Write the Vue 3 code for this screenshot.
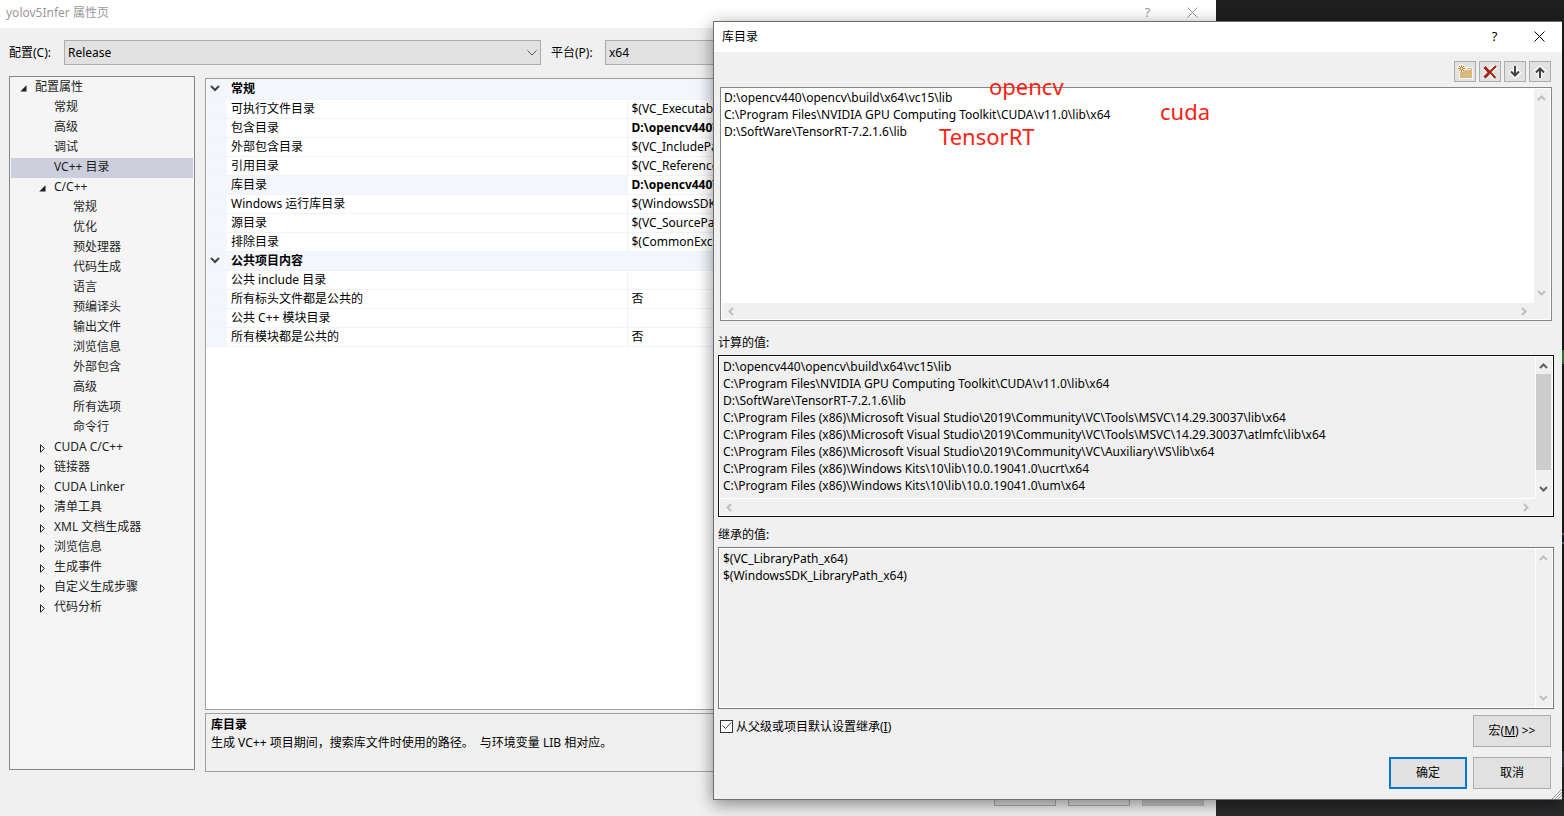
<script setup>
import { ref } from 'vue'

const tree = [
  { text: '配置属性', level: 0, state: 'open' },
  { text: '常规', level: 1 },
  { text: '高级', level: 1 },
  { text: '调试', level: 1 },
  { text: 'VC++ 目录', level: 1, selected: true },
  { text: 'C/C++', level: 1, state: 'open' },
  { text: '常规', level: 2 },
  { text: '优化', level: 2 },
  { text: '预处理器', level: 2 },
  { text: '代码生成', level: 2 },
  { text: '语言', level: 2 },
  { text: '预编译头', level: 2 },
  { text: '输出文件', level: 2 },
  { text: '浏览信息', level: 2 },
  { text: '外部包含', level: 2 },
  { text: '高级', level: 2 },
  { text: '所有选项', level: 2 },
  { text: '命令行', level: 2 },
  { text: 'CUDA C/C++', level: 1, state: 'closed' },
  { text: '链接器', level: 1, state: 'closed' },
  { text: 'CUDA Linker', level: 1, state: 'closed' },
  { text: '清单工具', level: 1, state: 'closed' },
  { text: 'XML 文档生成器', level: 1, state: 'closed' },
  { text: '浏览信息', level: 1, state: 'closed' },
  { text: '生成事件', level: 1, state: 'closed' },
  { text: '自定义生成步骤', level: 1, state: 'closed' },
  { text: '代码分析', level: 1, state: 'closed' },
]

const props = [
  { group: true, name: '常规' },
  { name: '可执行文件目录', value: '$(VC_ExecutablePath_x64)' },
  { name: '包含目录', value: 'D:\\opencv440\\opencv\\build', bold: true },
  { name: '外部包含目录', value: '$(VC_IncludePath)' },
  { name: '引用目录', value: '$(VC_ReferencesPath_x64)' },
  { name: '库目录', value: 'D:\\opencv440\\opencv\\build', bold: true, selected: true },
  { name: 'Windows 运行库目录', value: '$(WindowsSDK_MetadataPath)' },
  { name: '源目录', value: '$(VC_SourcePath)' },
  { name: '排除目录', value: '$(CommonExcludePath)' },
  { group: true, name: '公共项目内容' },
  { name: '公共 include 目录', value: '' },
  { name: '所有标头文件都是公共的', value: '否' },
  { name: '公共 C++ 模块目录', value: '' },
  { name: '所有模块都是公共的', value: '否' },
]

const own = [
  'D:\\opencv440\\opencv\\build\\x64\\vc15\\lib',
  'C:\\Program Files\\NVIDIA GPU Computing Toolkit\\CUDA\\v11.0\\lib\\x64',
  'D:\\SoftWare\\TensorRT-7.2.1.6\\lib',
]
const vs = 'C:\\Program Files (x86)\\Microsoft Visual Studio\\2019\\Community\\VC\\'
const kits = 'C:\\Program Files (x86)\\Windows Kits\\10\\lib\\10.0.19041.0\\'

const boxes = [
  { id: 'own', lines: own, hbar: true },
  {
    id: 'computed',
    label: '计算的值:',
    lines: [
      ...own,
      vs + 'Tools\\MSVC\\14.29.30037\\lib\\x64',
      vs + 'Tools\\MSVC\\14.29.30037\\atlmfc\\lib\\x64',
      vs + 'Auxiliary\\VS\\lib\\x64',
      kits + 'ucrt\\x64',
      kits + 'um\\x64',
    ],
    hbar: true,
    thumb: true,
  },
  { id: 'inherited', label: '继承的值:', lines: ['$(VC_LibraryPath_x64)', '$(WindowsSDK_LibraryPath_x64)'] },
]
const inherit = ref(true)
</script>

<template>
  <div class="desktop">
    <i class="mark green"></i>
    <i class="mark blue"></i>

    <main class="window pages">
      <header class="title">
        <h1>yolov5Infer 属性页</h1>
        <button class="cap" type="button" aria-label="帮助">?</button>
        <button class="cap" type="button" aria-label="关闭">
          <svg width="11" height="11" viewBox="0 0 11 11"><path d="M.5 .5l10 10M10.5 .5l-10 10" /></svg>
        </button>
      </header>

      <div class="config">
        <label for="cfg">配置(C):</label>
        <span class="combo first">
          <select id="cfg"><option>Release</option></select>
          <svg width="10" height="6" viewBox="0 0 10 6"><path d="M.5 .5L5 5L9.5 .5" /></svg>
        </span>
        <label for="plat" class="second-label">平台(P):</label>
        <span class="combo second">
          <select id="plat"><option>x64</option></select>
          <svg width="10" height="6" viewBox="0 0 10 6"><path d="M.5 .5L5 5L9.5 .5" /></svg>
        </span>
      </div>

      <div class="body">
        <ul class="tree">
          <li v-for="(n, i) in tree" :key="i" :class="['lv' + n.level, { sel: n.selected }]">
            <span class="twist">
              <svg v-if="n.state === 'open'" width="7" height="7" viewBox="0 0 7 7"><path class="solid" d="M6.5 .3V6.5H.3z" /></svg>
              <svg v-else-if="n.state === 'closed'" width="7" height="9" viewBox="0 0 7 9"><path class="hollow" d="M1.5 .8V8.2L5.4 4.5z" /></svg>
            </span>{{ n.text }}
          </li>
        </ul>

        <div class="right">
          <div class="grid">
            <table>
              <colgroup><col class="c1" /><col class="c2" /><col /></colgroup>
              <tbody>
                <tr v-for="(p, i) in props" :key="i" :class="{ group: p.group, picked: p.selected }">
                  <td class="gutter">
                    <svg v-if="p.group" width="10" height="7" viewBox="0 0 10 7"><path d="M1 1L5 5L9 1" /></svg>
                  </td>
                  <th v-if="p.group" colspan="2">{{ p.name }}</th>
                  <template v-else>
                    <td class="name">{{ p.name }}</td>
                    <td class="value" :class="{ bold: p.bold }">{{ p.value }}</td>
                  </template>
                </tr>
              </tbody>
            </table>
          </div>
          <section class="desc">
            <h2>库目录</h2>
            <p>生成 VC++ 项目期间，搜索库文件时使用的路径。&nbsp; 与环境变量 LIB 相对应。</p>
          </section>
        </div>
      </div>

      <footer class="foot">
        <button type="button" aria-label="确定"></button>
        <button type="button" aria-label="取消"></button>
        <button type="button" aria-label="应用" disabled></button>
      </footer>
    </main>

    <section class="window dialog">
      <header class="title">
        <h1>库目录</h1>
        <button class="cap" type="button" aria-label="帮助">?</button>
        <button class="cap" type="button" aria-label="关闭">
          <svg width="11" height="11" viewBox="0 0 11 11"><path d="M.5 .5l10 10M10.5 .5l-10 10" /></svg>
        </button>
      </header>

      <div class="tools">
        <button type="button" aria-label="新行">
          <svg width="16" height="16" viewBox="0 0 16 16">
            <path fill="#f6f6f6" d="M2 5h7V3h7v12H2z" />
            <path fill="#dcb67a" d="M3 6h6l1-1h5v9H3z" />
            <path fill="#dcb67a" d="M10 4h5v1h-5z" />
            <path fill="#f6f6f6" d="M10 5h4v1h-4z" />
            <circle cx="4" cy="4" r="4" fill="#f6f6f6" />
            <path stroke="#c27d1a" fill="none" d="M4.500 1v7M1 4.500h7M2 2l5 5M7 2l-5 5" />
            <circle cx="4.500" cy="4.500" r="1" fill="#f6f6f6" />
          </svg>
        </button>
        <button type="button" aria-label="删除">
          <svg width="16" height="16" viewBox="0 0 16 16">
            <path stroke="#f6f6f6" stroke-width="5" fill="none" d="M2 3l11 11M14 2L2 13" />
            <path stroke="#a1260d" stroke-width="3" fill="none" d="M2.500 3L8 9M7 9L2.500 13.500" />
            <path stroke="#a1260d" stroke-width="2" fill="none" d="M7 7l6.500 7M14 2L7 9" />
          </svg>
        </button>
        <button type="button" aria-label="下移">
          <svg width="16" height="16" viewBox="0 0 16 16">
            <path stroke="#f6f6f6" stroke-width="5" fill="none" d="M8 2v11M3 7l5 5l5-5" />
            <path stroke="#424242" stroke-width="2" fill="none" d="M8 2v10M4 7.500l4 4l4-4" />
          </svg>
        </button>
        <button type="button" aria-label="上移">
          <svg width="16" height="16" viewBox="0 0 16 16">
            <path stroke="#f6f6f6" stroke-width="5" fill="none" d="M8 14V4M3 9l5-5l5 5" />
            <path stroke="#424242" stroke-width="2" fill="none" d="M8 14V4M4 8.500l4-4l4 4" />
          </svg>
        </button>
      </div>

      <template v-for="b in boxes" :key="b.id">
        <label v-if="b.label" :for="b.id" :class="['caption', 'cap-' + b.id]">{{ b.label }}</label>
        <div :class="['box', b.id, { hasbar: b.hbar }]">
          <textarea :id="b.id" :aria-label="b.label || '库目录'" wrap="off" spellcheck="false" :readonly="b.id !== 'own'" :value="b.lines.join('\n')"></textarea>
          <div class="vbar" :class="{ active: b.thumb }">
            <svg width="9" height="6" viewBox="0 0 9 6"><path d="M1 5L4.500 1.500L8 5" /></svg>
            <span class="track"><span v-if="b.thumb" class="thumb"></span></span>
            <svg width="9" height="6" viewBox="0 0 9 6"><path d="M1 1L4.500 4.500L8 1" /></svg>
          </div>
          <div v-if="b.hbar" class="hbar">
            <svg width="6" height="9" viewBox="0 0 6 9"><path d="M5 1L1.500 4.500L5 8" /></svg>
            <svg width="6" height="9" viewBox="0 0 6 9"><path d="M1 1L4.500 4.500L1 8" /></svg>
          </div>
        </div>
      </template>

      <div class="options">
        <label class="check">
          <input v-model="inherit" type="checkbox" />
          <svg width="11" height="11" viewBox="0 0 11 11"><path v-if="inherit" d="M1.500 5.500L4.500 8.500L10 2.500" /></svg>
          <span>从父级或项目默认设置继承(<u>I</u>)</span>
        </label>
        <button class="push" type="button"><span>宏(<u>M</u>) &gt;&gt;</span></button>
      </div>
      <div class="actions">
        <button class="push primary" type="button">确定</button>
        <button class="push" type="button">取消</button>
      </div>

      <svg class="grip" width="10" height="10" viewBox="0 0 10 10"><path d="M0 10L10 0M3 10L10 3M6 10L10 6" /></svg>
      <span class="note opencv">opencv</span>
      <span class="note cuda">cuda</span>
      <span class="note trt">TensorRT</span>
    </section>
  </div>
</template>

<style>
body {
  margin: 0;
}
</style>

<style scoped>
* {
  box-sizing: border-box;
}
.desktop {
  position: relative;
  height: 100vh;
  min-height: 700px;
  overflow: hidden;
  background: linear-gradient(#1e1e1e 92%, #3f3f44 92%, #3f3f44 94%, #2a2a2c 94%);
  color: #000;
  font: 12px/17px "Noto Sans", "Noto Sans CJK SC", sans-serif;
}
button,
select,
textarea {
  font: inherit;
  color: inherit;
  margin: 0;
  border-radius: 0;
}
h1,
h2,
p,
ul {
  margin: 0;
  padding: 0;
  font-size: 12px;
  font-weight: 400;
}
svg {
  display: block;
  flex: none;
}
.mark {
  position: absolute;
  right: 0;
  width: 2px;
}
.green {
  top: 350px;
  height: 14px;
  background: #388a34;
}
.blue {
  top: 533px;
  height: 11px;
  border-top: 2px solid #3b78a8;
  border-bottom: 2px solid #3b78a8;
}
.window {
  display: flex;
  flex-direction: column;
  background: #f0f0f0;
}
.pages {
  height: 100%;
  width: calc(100% - 348px);
}
.title {
  display: flex;
  align-items: center;
  flex: none;
  background: #fff;
}
.title h1 {
  flex: 1;
}
.cap {
  display: flex;
  align-items: center;
  justify-content: center;
  width: 45px;
  height: 28px;
  padding: 0;
  border: 0;
  background: none;
  font-size: 13px;
}
.cap path {
  stroke: currentColor;
  fill: none;
}
.pages .title {
  height: 28px;
  padding: 0 1px 4px 6px;
  color: #999;
}
.config {
  display: flex;
  align-items: center;
  flex: none;
  height: 48px;
  padding: 0 12px 0 9px;
}
.config label {
  width: 55px;
}
.config .second-label {
  width: 54px;
}
.combo {
  position: relative;
  height: 25px;
  margin-right: 10px;
}
.first {
  flex: 477;
}
.second {
  flex: 599;
  margin-right: 0;
}
.combo select {
  appearance: none;
  width: 100%;
  height: 25px;
  padding: 0 20px 0 3px;
  border: 1px solid #adadad;
  background: #e1e1e1;
}
.combo svg {
  position: absolute;
  right: 4px;
  top: 10px;
  pointer-events: none;
}
.combo path {
  stroke: #555;
  fill: none;
}
.body {
  display: flex;
  flex: 1;
  min-height: 0;
  padding: 0 12px 0 9px;
  gap: 10px;
}
.tree {
  width: 186px;
  flex: none;
  margin-bottom: 2px;
  padding: 1px;
  border: 1px solid #828790;
  background: #f5f5f5;
  color: #1e1e1e;
  list-style: none;
  overflow: hidden;
}
.tree li {
  display: flex;
  align-items: flex-start;
  height: 20px;
  line-height: 18px;
  white-space: pre;
}
.lv0 {
  padding-left: 9px;
}
.lv1 {
  padding-left: 28px;
}
.lv2 {
  padding-left: 47px;
}
.twist {
  align-self: center;
  width: 15px;
}
.sel {
  background: #cccedb;
}
.solid {
  fill: #1e1e1e;
}
.hollow {
  fill: #fff;
  stroke: #1e1e1e;
}
.right {
  display: flex;
  flex-direction: column;
  flex: 1;
  min-width: 0;
  padding-top: 2px;
  gap: 3px;
}
.grid {
  flex: 1;
  min-height: 0;
  border: 1px solid #a0a0a0;
  background: #fff;
  overflow: hidden;
}
table {
  width: 100%;
  table-layout: fixed;
  border-collapse: collapse;
}
.c1 {
  width: 21px;
}
.c2 {
  width: 400px;
}
tr {
  height: 19px;
}
tr:first-child {
  height: 20px;
}
td,
th {
  padding: 0 0 0 4px;
  line-height: 18px;
  text-align: left;
  white-space: nowrap;
  overflow: hidden;
  border-bottom: 1px solid #f0f3fa;
}
.gutter,
.group th,
.picked .name {
  background: #f3f6fb;
}
.gutter path {
  fill: none;
  stroke: #444;
  stroke-width: 2;
}
.value {
  border-left: 1px solid #f0f3fa;
}
.bold {
  font-weight: 700;
}
.desc {
  height: 59px;
  flex: none;
  padding: 2px 5px;
  border: 1px solid #a0a0a0;
  line-height: 18px;
  white-space: nowrap;
}
.desc h2 {
  font-weight: 700;
}
.foot {
  display: flex;
  justify-content: flex-end;
  flex: none;
  height: 44px;
  padding: 12px 12px 0 0;
  gap: 12px;
}
.foot button {
  width: 62px;
  height: 22px;
  border: 1px solid #adadad;
  background: #e1e1e1;
}
.foot button:disabled {
  background: #ccc;
  border-color: #bfbfbf;
}
.dialog {
  position: absolute;
  left: 713px;
  right: 2px;
  top: 21px;
  bottom: 16px;
  border: 1px solid #6e6e6e;
  border-right: 0;
  box-shadow: 0 4px 16px rgba(0, 0, 0, 0.45);
}
.dialog .title {
  height: 30px;
  padding: 0 0 2px 8px;
}
.tools {
  display: flex;
  justify-content: flex-end;
  flex: none;
  gap: 3px;
  padding: 9px 11px 5px 0;
}
.tools button {
  display: grid;
  place-items: center;
  width: 22px;
  height: 21px;
  padding: 0;
  border: 1px solid #adadad;
  background: #e1e1e1;
}
.caption {
  flex: none;
  padding: 0 4px;
}
.cap-computed {
  height: 34px;
  line-height: 44px;
}
.cap-inherited {
  height: 30px;
  line-height: 36px;
}
.box {
  display: grid;
  grid-template-columns: minmax(0, 1fr) 17px;
  grid-template-rows: minmax(0, 1fr);
  flex: 162 1 0;
  min-height: 0;
  margin: 0 8px 0 4px;
  padding: 1px;
  border: 1px solid #7a7a7a;
  background: #f0f0f0;
  box-shadow: inset 0 0 0 1px #fff;
}
.hasbar {
  grid-template-rows: minmax(0, 1fr) 17px;
}
.own {
  flex-grow: 236;
  margin: 0 10px 0 6px;
  border-color: #828790;
}
.computed {
  border-color: #111;
}
textarea {
  display: block;
  resize: none;
  border: 0;
  outline: 0;
  padding: 1px 3px;
  background: #f0f0f0;
  overflow: hidden;
}
.own textarea {
  background: #fff;
  padding: 0 2px;
}
.vbar {
  display: flex;
  flex-direction: column;
  align-items: center;
  padding: 6px 1px 6px 0;
  border-left: 1px solid #fff;
}
.track {
  flex: 1;
  width: 15px;
  padding: 5px 0;
}
.thumb {
  display: block;
  height: 90%;
  background: #cdcdcd;
}
.vbar path,
.hbar path {
  fill: none;
  stroke: #bfbfbf;
  stroke-width: 2;
}
.vbar.active path {
  stroke: #606060;
}
.hbar {
  display: flex;
  align-items: center;
  justify-content: space-between;
  padding: 0 6px;
  border-top: 1px solid #fff;
}
.options,
.actions {
  display: flex;
  flex: none;
  justify-content: space-between;
  padding: 6px 11px 0 6px;
}
.actions {
  justify-content: flex-end;
  gap: 6px;
  padding: 10px 11px 10px 0;
}
.check {
  display: flex;
  align-items: center;
  height: 22px;
  gap: 3px;
  position: relative;
}
.check input {
  appearance: none;
  width: 13px;
  height: 13px;
  margin: 0;
  border: 1px solid #333;
  background: #fff;
}
.check svg {
  position: absolute;
  left: 1px;
  top: 5px;
  pointer-events: none;
}
.check path {
  fill: none;
  stroke: #333;
}
.push {
  width: 78px;
  height: 32px;
  padding: 0 0 2px;
  border: 1px solid #adadad;
  background: #e1e1e1;
}
.primary {
  border: 2px solid #0078d7;
}
.grip {
  position: absolute;
  right: 0;
  bottom: 0;
}
.grip path {
  stroke: #999;
}
.note {
  position: absolute;
  color: #ff1e12;
  font-size: 22px;
  line-height: 28px;
}
.opencv {
  left: 275px;
  top: 50px;
}
.cuda {
  left: 446px;
  top: 75px;
}
.trt {
  left: 225px;
  top: 100px;
}
</style>
